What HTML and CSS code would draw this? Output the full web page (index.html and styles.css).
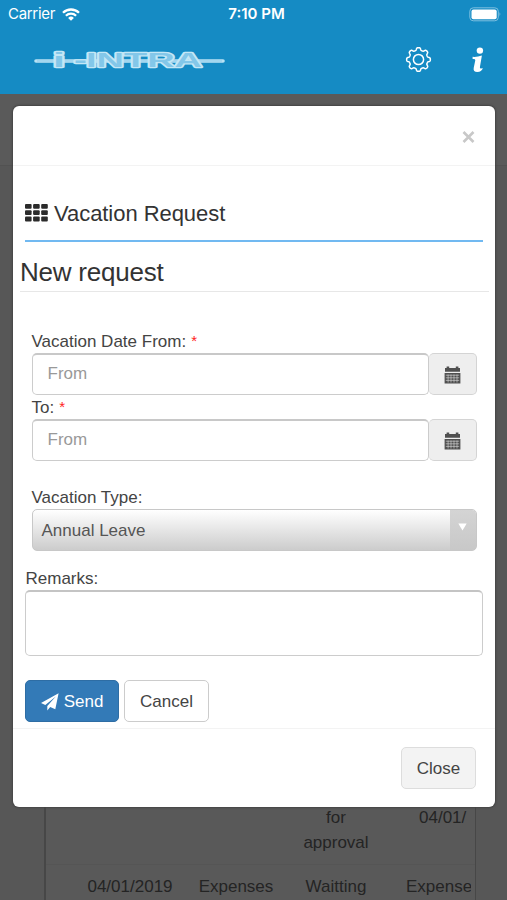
FILE: index.html
```html
<!DOCTYPE html>
<html lang="en">
<head>
<meta charset="utf-8">
<title>Vacation Request</title>
<link rel="stylesheet" href="styles.css">
</head>
<body>
<header class="top">
  <div class="status">
    <div class="carrier"><span>Carrier</span>
      <svg width="18" height="13" viewBox="0 0 18 13"><g fill="none" stroke="#fff" stroke-width="2.3"><path d="M1 4.8a11.4 11.4 0 0 1 16 0M3.9 7.8a7.3 7.3 0 0 1 10.2 0"/></g><path d="M6.1 9.9a4.2 4.2 0 0 1 5.8 0L9 12.8z" fill="#fff"/></svg>
    </div>
    <div class="time">7:10 PM</div>
    <svg class="battery" width="33" height="15" viewBox="0 0 33 15"><rect x=".8" y=".8" width="28.5" height="13" rx="3.5" fill="none" stroke="#7dbfe0"/><rect x="2.5" y="2.5" width="25.2" height="9.7" rx="2" fill="#fff"/><path d="M30.6 5v4.5q1.6-2.2 0-4.5" fill="#9bcfe8"/></svg>
  </div>
  <div class="bar">
    <svg class="logo" width="192" height="24" viewBox="0 0 192 24">
      <path d="M2 12H189" stroke="#b9e2f4" stroke-width="3.6" stroke-linecap="round"/>
      <path d="M3 12H188" stroke="#8dcbeb" stroke-width="1"/>
      <g class="logo-text">
        <text x="19" y="17.5" textLength="12" lengthAdjust="spacingAndGlyphs">i</text>
        <text x="40" y="17.5" textLength="13" lengthAdjust="spacingAndGlyphs">-</text>
        <text x="52" y="17.5" textLength="116" lengthAdjust="spacingAndGlyphs">INTRA</text>
      </g>
    </svg>
    <svg class="gear" width="27" height="27" viewBox="-13.5 -13.5 27 27" fill="none" stroke="#fff" stroke-width="1.5" stroke-linejoin="round"><circle r="5.1"/><path id="cog"/></svg>
    <svg class="info" width="12" height="26" viewBox="0 0 12 26" fill="#fff"><circle cx="7.9" cy="3.6" r="3.2"/><path d="M.6 9.8Q5 10.2 9.9 8.6L8 19.6Q7.6 21.6 8.6 21.6L10.9 21.2Q9.6 24.9 5.3 24.9Q1 24.9 1.7 21L3.3 13.2Q3.6 11.8 .6 12z"/></svg>
  </div>
</header>
<main class="page">
  <div class="page-strip"></div>
  <section class="table">
    <div class="row first">
      <span></span><span></span><span>for<br>approval</span><span class="cut"><b>04/01/</b></span>
    </div>
    <div class="row">
      <span><b class="date">04/01/2019</b></span><span><b class="exp">Expenses</b></span><span><b class="wait">Waitting</b></span><span class="cut"><b class="last">Expense</b></span>
    </div>
  </section>
</main>
<div class="modal">
  <div class="modal-head"><svg width="13" height="12" viewBox="0 0 13 12"><path d="M1.5 1L11.5 11M11.5 1L1.5 11" stroke="#c8c8c8" stroke-width="2.6"/></svg></div>
  <div class="modal-body">
    <h3 class="title">
      <svg width="23" height="18" viewBox="0 0 23 18" fill="#2b2b2b"><g id="r"><rect width="6.6" height="4.8" rx="1"/><rect x="8.1" width="6.6" height="4.8" rx="1"/><rect x="16.2" width="6.6" height="4.8" rx="1"/></g><use href="#r" y="6.3"/><use href="#r" y="12.6"/></svg>
      <span>Vacation Request</span>
    </h3>
    <h2 class="sub"><span>New request</span></h2>
    <div class="field"><label>Vacation Date From:</label><i>*</i></div>
    <div class="group"><div class="input">From</div><div class="addon"><svg width="17" height="18" viewBox="0 0 17 18"><path id="cal" fill="#505050" d="M1 2H2.6V.4H5.2V2H11.8V.4H14.4V2H16V5.8H1zM.6 7H16.4V17.4H.6z"/><path id="grid" d="M1.8 9.2H15.2M1.8 11.8H15.2M1.8 14.4H15.2M4.1 8.5V16.5M7 8.5V16.5M10 8.5V16.5M13 8.5V16.5" stroke="#ddd" stroke-width=".6"/></svg></div></div>
    <div class="field second"><label>To:</label><i>*</i></div>
    <div class="group"><div class="input">From</div><div class="addon"><svg width="17" height="18" viewBox="0 0 17 18"><use href="#cal"/><use href="#grid"/></svg></div></div>
    <div class="field type"><label>Vacation Type:</label></div>
    <div class="select"><span>Annual Leave</span><div class="arrow"><svg width="9" height="8" viewBox="0 0 9 8"><path d="M.3 .5H8.7L4.5 7.5z" fill="#fff"/></svg></div></div>
    <div class="field remarks"><label>Remarks:</label></div>
    <div class="area"></div>
    <div class="actions">
      <div class="btn send"><svg width="18" height="18" viewBox="0 0 18 18"><path fill="#fff" d="M17.6.2L0 10.1l4.3 2L14.8 3.5 6.3 13v4.5l2.9-3.4 5.1 2.2z"/></svg><span>Send</span></div>
      <div class="btn cancel">Cancel</div>
    </div>
  </div>
  <div class="modal-foot"><div class="btn close">Close</div></div>
</div>
<script src="gear.js"></script>
</body>
</html>
```
FILE: gear.js
```js
// Smooth eight-toothed cog outline
const points = [];
for (let i = 0; i < 240; i++) {
  const a = i / 240 * Math.PI * 2;
  const r = 10.6 + 1.3 * Math.tanh(2 * Math.cos(8 * a));
  points.push((r * Math.cos(a)).toFixed(2) + " " + (r * Math.sin(a)).toFixed(2));
}
document.getElementById("cog").setAttribute("d", "M" + points.join("L") + "Z");
```
FILE: styles.css
```css
* { box-sizing: border-box; }
body { margin: 0; width: 507px; height: 900px; overflow: hidden; position: relative; background: #575757; font: 17px/24px "Liberation Sans", sans-serif; color: #444; }
svg { display: block; flex: none; }
.top { height: 94px; background: #158bc4; color: #fff; }
.status { height: 28px; display: grid; grid-template-columns: 1fr auto 1fr; align-items: center; padding: 0 5px 0 8px; }
.carrier { display: flex; align-items: center; gap: 7px; font: 15px/24px Inter, sans-serif; letter-spacing: -.3px; }
.time { font: 600 15px/24px Inter, sans-serif; letter-spacing: 0; padding-left: 3px; }
.battery { justify-self: end; }
.bar { height: 63px; display: flex; align-items: center; padding: 0 23px 0 34px; }
.logo { margin-top: 2px; }
.logo-text { font: bold 20px "Liberation Sans", sans-serif; fill: #83c7e9; stroke: #c4e7f6; stroke-width: 2.4px; stroke-linejoin: round; paint-order: stroke; }
.gear { margin-left: auto; margin-right: 40px; }
.page { height: 806px; display: flex; flex-direction: column; color: #242424; }
.page-strip { flex: none; height: 72px; background: #5a5a5a; border-bottom: 1px solid #525252; }
.table { margin: 0 31px 0 44px; flex: 1; min-height: 0; border: solid #474747; border-width: 0 1px 0 2px; padding-top: 639px; background: #595959; }
.row { display: grid; grid-template-columns: 139px 102px 98px 91px; text-align: center; line-height: 25px; height: 68px; padding-top: 9px; border-top: 1px solid #555; }
.row.first { height: 59px; padding-top: 0; border: 0; }
.row b { font-weight: normal; }
.row > span { white-space: nowrap; }
.row .cut { overflow: hidden; text-align: left; padding-left: 21px; margin-right: 5px; }
.row.first .cut { padding-left: 34px; }
.date { margin-left: 29px; }
.modal { position: absolute; left: 13px; top: 106px; width: 482px; height: 701px; background: #fff; border-radius: 6px; box-shadow: 0 0 2px 1px #444; display: flex; flex-direction: column; }
.modal-head { height: 60px; border-bottom: 1px solid #f3f3f3; display: flex; justify-content: flex-end; align-items: center; padding: 3px 20px 0 0; }
.modal-body { height: 562px; padding: 0 12.5px 0 12px; }
h2, h3 { margin: 0; font-weight: normal; }
.title { height: 76px; border-bottom: 2px solid #71b9f1; display: flex; align-items: center; gap: 6px; padding-top: 20px; font-size: 22px; line-height: 28px; color: #333; }
.title svg { margin-top: -1px; }
.title span { padding-top: 1px; letter-spacing: -.05px; }
.sub { height: 50px; margin: 0 -6px 0 -5px; border-bottom: 1px solid #e7e7e7; font-size: 26px; line-height: 32px; padding-top: 14px; color: #333; letter-spacing: -.22px; }
.field { display: flex; gap: 5px; height: 24px; margin: 37px 6.5px 0; padding-top: .5px; }
.field i { font-style: normal; font-size: 15px; line-height: 22px; color: #f22; }
.field.second { margin-top: 1px; }
.field.type { margin-top: 25px; }
.field.remarks { margin: 16px .5px 0; }
.group { display: flex; height: 42px; margin: 0 6px 0 6.5px; margin-bottom: -1px; }
.input { flex: 1; border: 1px solid #ccc; border-top: 2px solid #c8c8c8; border-radius: 5px; padding: 7px 15px; color: #999; }
.addon { width: 48px; border: 1px solid #d4d4d4; border-left-width: 0; border-radius: 5px; background: #eee; display: grid; place-items: center; padding-top: 2px; }
.select { height: 42px; margin: 0 6px -1px 6.5px; border: 1px solid #c8c8c8; border-radius: 5px; background: linear-gradient(#fff, #ccc); display: flex; justify-content: space-between; overflow: hidden; color: #555; line-height: 41px; padding-left: 9px; }
.arrow { width: 26px; background: linear-gradient(#d4d4d4, #c8c8c8); display: grid; place-items: center; padding-bottom: 6px; }
.area { height: 66px; border: 1px solid #ccc; border-top: 2px solid #c4c4c4; border-radius: 5px; }
.actions { display: flex; gap: 5px; margin-top: 24px; }
.btn { height: 42px; border: 1px solid #ccc; border-radius: 5px; display: flex; justify-content: center; align-items: center; padding-top: 1px; }
.send { width: 94px; background: #337ab7; border-color: #2e6da4; color: #fff; gap: 5px; }
.cancel { width: 85px; }
.modal-foot { flex: 1; border-top: 1px solid #f3f3f3; display: flex; justify-content: flex-end; padding: 18px 19px 0 0; }
.close { width: 75px; background: #f3f3f3; border-color: #ddd; }
```
